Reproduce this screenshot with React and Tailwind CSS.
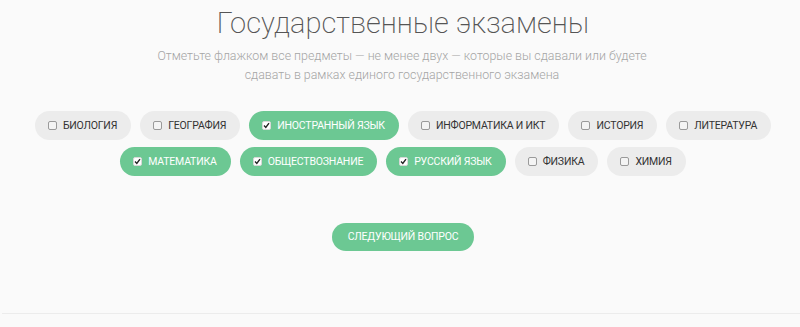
import React, { useState } from "react";

const SUBJECTS = [
  ["Биология", false],
  ["География", false],
  ["Иностранный язык", true],
  ["Информатика и ИКТ", false],
  ["История", false],
  ["Литература", false],
  ["Математика", true],
  ["Обществознание", true],
  ["Русский язык", true],
  ["Физика", false],
  ["Химия", false],
];

const Box = ({ checked }) => (
  <span
    className={`flex items-center justify-center w-[9px] h-[9px] rounded-[2px] border ${
      checked ? "bg-white border-[#d8d8d8]" : "bg-[#f4f4f4] border-[#9a9a9a]"
    }`}
  >
    {checked && (
      <svg width="7" height="7" viewBox="0 0 7 7">
        <path d="M1 3.6 L2.8 5.4 L6 1.2" fill="none" stroke="#222" strokeWidth="1.4" />
      </svg>
    )}
  </span>
);

const Chip = ({ label, checked, onClick }) => (
  <button
    onClick={onClick}
    className={`flex items-center gap-[6px] h-[29px] pl-[13px] pr-[14px] rounded-full text-[10.5px] uppercase tracking-[-0.2px] ${
      checked ? "bg-[#6cc893] text-white" : "bg-[#ececec] text-[#333]"
    }`}
  >
    <Box checked={checked} />
    <span>{label}</span>
  </button>
);

export default function App() {
  const [picked, setPicked] = useState(
    Object.fromEntries(SUBJECTS.map(([name, on]) => [name, on]))
  );

  const toggle = (name) => setPicked((p) => ({ ...p, [name]: !p[name] }));

  return (
    <div className="min-h-[327px] bg-[#fafafa] font-['Roboto',sans-serif] flex flex-col">
      <div className="flex flex-col items-center pt-[4px]">
        <h1 className="text-[29px] leading-[38px] font-extralight text-[#555] pl-[6px]">
          Государственные экзамены
        </h1>
        <p className="mt-[4px] text-[12.4px] leading-[19px] font-light text-[#a5a5a5] text-center pl-[4px]">
          Отметьте флажком все предметы — не менее двух — которые вы сдавали или будете
          <br />
          сдавать в рамках единого государственного экзамена
        </p>
      </div>

      <div className="mt-[27px] pl-[6px] flex flex-wrap justify-center gap-x-[9px] gap-y-[7px]">
        {SUBJECTS.map(([name]) => (
          <Chip
            key={name}
            label={name}
            checked={picked[name]}
            onClick={() => toggle(name)}
          />
        ))}
      </div>

      <div className="mt-[47px] pl-[6px] flex justify-center">
        <button className="h-[28px] px-[16px] rounded-full bg-[#6cc893] text-white text-[10.5px] uppercase tracking-[-0.2px]">
          Следующий вопрос
        </button>
      </div>

      <div className="mt-[62px] ml-[2px] border-t border-[#ececec]" />
    </div>
  );
}
